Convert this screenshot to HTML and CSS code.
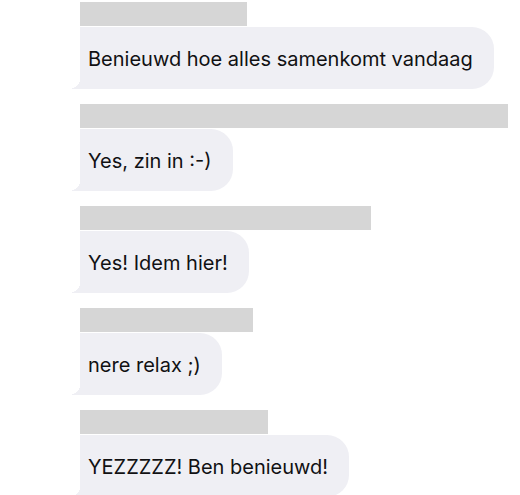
FILE: index.html
```html
<!DOCTYPE html>
<html lang="nl">
<head>
<meta charset="utf-8">
<title>Berichten</title>
<link rel="stylesheet" href="styles.css">
</head>
<body>
<div class="thread">
  <div class="group">
    <div class="name-bar" style="width:167px"></div>
    <div class="bubble">Benieuwd hoe alles samenkomt vandaag</div>
  </div>
  <div class="group">
    <div class="name-bar" style="width:428px"></div>
    <div class="bubble">Yes, zin in :-)</div>
  </div>
  <div class="group">
    <div class="name-bar" style="width:291px"></div>
    <div class="bubble">Yes! Idem hier!</div>
  </div>
  <div class="group">
    <div class="name-bar" style="width:173px"></div>
    <div class="bubble">nere relax ;)</div>
  </div>
  <div class="group">
    <div class="name-bar" style="width:188px"></div>
    <div class="bubble">YEZZZZZ! Ben benieuwd!</div>
  </div>
</div>
</body>
</html>
```
FILE: styles.css
```css
html, body {
  margin: 0;
  padding: 0;
  background: #ffffff;
}

.thread {
  display: flex;
  flex-direction: column;
  align-items: flex-start;
  gap: 15px;
  padding: 2px 0 0 80px;
  font-family: Inter, "Liberation Sans", sans-serif;
}

.group {
  display: flex;
  flex-direction: column;
  align-items: flex-start;
  gap: 1px;
}

.name-bar {
  height: 24px;
  background: #d6d6d6;
}

.bubble {
  position: relative;
  height: 62px;
  box-sizing: border-box;
  display: flex;
  align-items: center;
  padding: 1px 21px 0 8px;
  background: #efeff4;
  color: #111113;
  font-size: 20px;
  border-radius: 0 22px 22px 0;
  white-space: nowrap;
}

.bubble::before {
  content: "";
  position: absolute;
  left: -8px;
  bottom: 0;
  width: 8px;
  height: 10px;
  background: radial-gradient(ellipse 8px 9px at 0 0, transparent 98%, #efeff4 100%);
}
```
